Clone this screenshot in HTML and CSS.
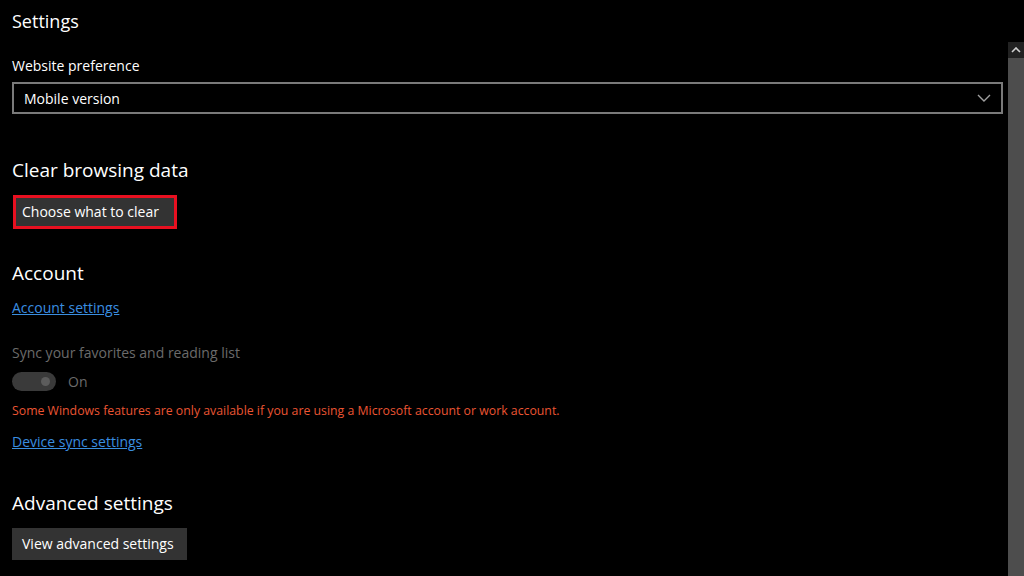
FILE: index.html
```html
<!DOCTYPE html>
<html>
<head>
<meta charset="utf-8">
<link rel="stylesheet" href="styles.css">
</head>
<body>
<div class="page">
  <div class="content">
    <div class="title">Settings</div>
    <div class="label">Website preference</div>
    <div class="select">
      <span class="select-text">Mobile version</span>
      <svg class="chev" width="14" height="8" viewBox="0 0 14 8"><path d="M1 1 L7 7 L13 1" fill="none" stroke="#a0a0a0" stroke-width="1.4"/></svg>
    </div>

    <div class="heading h-clear">Clear browsing data</div>
    <div class="highlight"><div class="btn btn-clear">Choose what to clear</div></div>

    <div class="heading h-account">Account</div>
    <a class="link l-account">Account settings</a>
    <div class="disabled-label">Sync your favorites and reading list</div>
    <div class="toggle-row">
      <div class="toggle"><div class="knob"></div></div>
      <span class="toggle-text">On</span>
    </div>
    <div class="warning">Some Windows features are only available if you are using a Microsoft account or work account.</div>
    <a class="link l-device">Device sync settings</a>

    <div class="heading h-adv">Advanced settings</div>
    <div class="btn btn-adv">View advanced settings</div>
  </div>
  <div class="scrollbar">
    <div class="sb-up">
      <svg width="10" height="6" viewBox="0 0 10 6"><path d="M1 5 L5 1 L9 5" fill="none" stroke="#d0d0d0" stroke-width="1.6"/></svg>
    </div>
    <div class="sb-thumb"></div>
  </div>
</div>
</body>
</html>
```
FILE: styles.css
```css
html, body {
  margin: 0;
  padding: 0;
  background: #000;
  height: 576px;
  overflow: hidden;
}
body {
  font-family: "Open Sans", "Noto Sans", sans-serif;
  color: #fff;
}
.page {
  display: flex;
  height: 576px;
}
.content {
  flex: 1;
  padding: 0 5px 0 12px;
  display: flex;
  flex-direction: column;
  align-items: flex-start;
}
.title {
  font-size: 18px;
  line-height: 24px;
  margin-top: 9px;
}
.label {
  font-size: 14px;
  line-height: 20px;
  margin-top: 23px;
}
.select {
  align-self: stretch;
  box-sizing: border-box;
  height: 32px;
  margin-top: 6px;
  border: 2px solid #7a7a7a;
  display: flex;
  align-items: center;
  justify-content: space-between;
  padding: 0 10px 0 10px;
}
.select-text {
  font-size: 14px;
}
.heading {
  font-size: 19px;
  line-height: 26px;
}
.h-clear { margin-top: 43px; }
.highlight {
  margin-top: 12px;
  margin-left: 1px;
  border: 3px solid #e81020;
}
.btn {
  background: #333;
  color: #fff;
  font-size: 14px;
  line-height: 20px;
}
.btn-clear {
  padding: 4px 15px 4px 6px;
}
.h-account { margin-top: 31px; }
.link {
  color: #3a8ee0;
  text-decoration: underline;
  font-size: 14px;
  line-height: 20px;
}
.l-account { margin-top: 12px; }
.disabled-label {
  color: #6b6b6b;
  font-size: 14px;
  line-height: 20px;
  margin-top: 25px;
}
.toggle-row {
  display: flex;
  align-items: center;
  margin-top: 9px;
}
.toggle {
  width: 44px;
  height: 19px;
  border-radius: 10px;
  background: #3a3a3a;
  position: relative;
}
.knob {
  position: absolute;
  right: 6px;
  top: 5px;
  width: 9px;
  height: 9px;
  border-radius: 50%;
  background: #5c5c5c;
}
.toggle-text {
  color: #6b6b6b;
  font-size: 14px;
  margin-left: 12px;
}
.warning {
  color: #eb5533;
  font-size: 12.3px;
  line-height: 18px;
  margin-top: 11px;
}
.l-device { margin-top: 12px; }
.h-adv { margin-top: 38px; }
.btn-adv {
  margin-top: 12px;
  padding: 6px 13px 6px 10px;
}
.scrollbar {
  width: 16px;
  margin-top: 42px;
  display: flex;
  flex-direction: column;
}
.sb-up {
  height: 16px;
  background: #222;
  display: flex;
  align-items: center;
  justify-content: center;
}
.sb-thumb {
  flex: 1;
  background: #4d4d4d;
}
```
